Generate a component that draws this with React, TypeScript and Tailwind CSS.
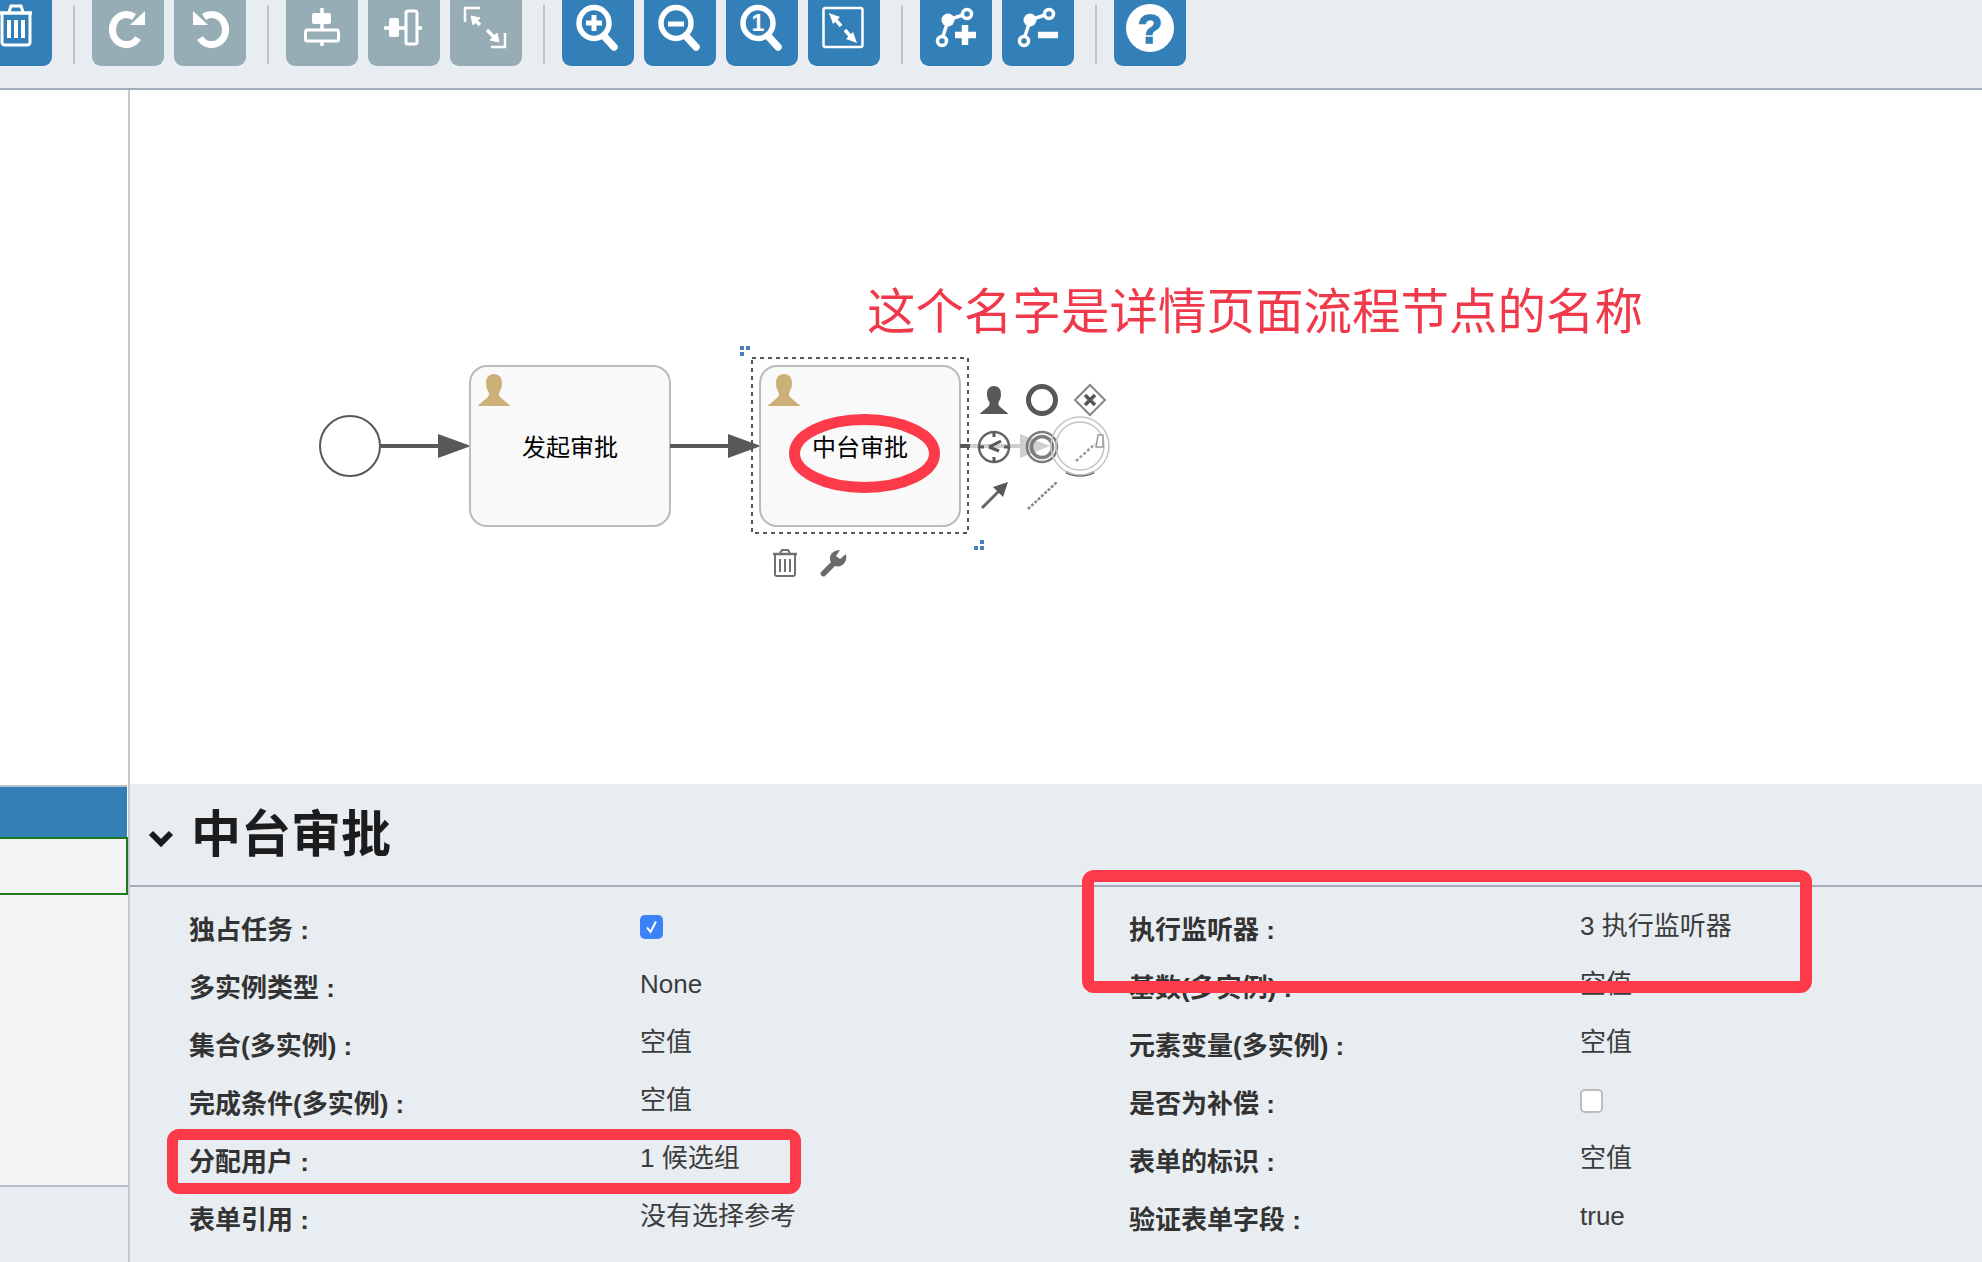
import React from "react";

const FONT = "font-['Liberation_Sans','Noto_Sans_CJK_SC',sans-serif]";

function Person({ x, y, s, fill }: { x: number; y: number; s: number; fill: string }) {
  return (
    <g transform={`translate(${x} ${y}) scale(${s})`} fill={fill}>
      <path d="M16 0c5 0 8 3.500 8 9 0 4-1 6.500-2.500 9-1 2 -.5 4 1 5.500L32 31.500V32H0v-.5l9.500-8c1.500-1.500 2-3.500 1-5.500C9 15.500 8 13 8 9c0-5.500 3-9 8-9z" />
    </g>
  );
}

function Lens({ children }: { children?: React.ReactNode }) {
  return (
    <g stroke="#fff" fill="none">
      <ellipse cx="32" cy="23" rx="15" ry="15.500" strokeWidth="5.500" />
      <path d="M42 36 L52 47" strokeWidth="7.500" strokeLinecap="round" />
      {children}
    </g>
  );
}

function Bend({ plus }: { plus: boolean }) {
  return (
    <g>
      <g stroke="#fff" strokeWidth="3.500" fill="none">
        <path d="M28 20 L43 15" />
        <path d="M27 24 L23 36" />
        <circle cx="47" cy="14" r="4.500" />
        <circle cx="22" cy="41" r="4.500" />
      </g>
      <circle cx="28" cy="20" r="6.500" fill="#fff" />
      {plus ? (
        <path d="M45 25 V45 M35 35 H56" stroke="#fff" strokeWidth="6.500" />
      ) : (
        <path d="M36 35 H56" stroke="#fff" strokeWidth="6.500" />
      )}
    </g>
  );
}

const icons: Record<string, React.ReactNode> = {
  trash: (
    <g fill="none" stroke="#fff">
      <path d="M20 13 H52" strokeWidth="3.500" />
      <path d="M29 12 L31 6 H41 L43 12" strokeWidth="3" />
      <path d="M22 14 V42 Q22 45 25 45 H47 Q50 45 50 42 V14" strokeWidth="3" />
      <path d="M29 20 V38 M36 20 V38 M43 20 V38" strokeWidth="4" />
    </g>
  ),
  redo: (
    <g>
      <path d="M46 38 A14 15 0 1 1 42 17" fill="none" stroke="#fff" strokeWidth="7" />
      <path d="M53 11 V25 H38 Z" fill="#fff" />
    </g>
  ),
  undo: (
    <g>
      <path d="M26 38 A14 15 0 1 0 30 17" fill="none" stroke="#fff" strokeWidth="7" />
      <path d="M19 11 V25 H34 Z" fill="#fff" />
    </g>
  ),
  alignV: (
    <g>
      <path d="M36 8 V46" stroke="#fff" strokeWidth="3.500" />
      <rect x="26" y="13" width="19" height="11" rx="2" fill="#fff" />
      <rect x="19.500" y="30" width="33" height="11" rx="2" fill="#97adb5" stroke="#fff" strokeWidth="3" />
    </g>
  ),
  alignH: (
    <g>
      <path d="M16 28 H54" stroke="#fff" strokeWidth="3.500" />
      <rect x="21" y="18" width="10" height="19" rx="2" fill="#fff" />
      <rect x="38" y="11" width="11" height="33" rx="2" fill="#97adb5" stroke="#fff" strokeWidth="3" />
    </g>
  ),
  same: (
    <g fill="none" stroke="#fff" strokeWidth="2.500">
      <path d="M15 22 V8 H30" />
      <path d="M55 33 V47 H41" />
      <path d="M30 25 L25 20" strokeWidth="3.500" />
      <path d="M21 16 L30 18 L23 25 Z" fill="#fff" strokeWidth="1" />
      <path d="M37 30 L45 38" strokeWidth="3.500" />
      <path d="M49 42 L40 40 L47 33 Z" fill="#fff" strokeWidth="1" />
    </g>
  ),
  zoomIn: (
    <Lens>
      <path d="M32 15 V31 M24 23 H40" strokeWidth="5" />
    </Lens>
  ),
  zoomOut: (
    <Lens>
      <path d="M24 24 H40" strokeWidth="5" />
    </Lens>
  ),
  zoomOne: (
    <Lens>
      <text x="32" y="31" textAnchor="middle" fontSize="23" fontWeight="700" fill="#fff" stroke="none" fontFamily="Liberation Sans">
        1
      </text>
    </Lens>
  ),
  fit: (
    <g>
      <rect x="15.500" y="8" width="39" height="39" rx="2" fill="none" stroke="#fff" strokeWidth="2.500" />
      <path d="M21 13 L32 17 L25 24 Z M49 43 L38 39 L45 32 Z" fill="#fff" />
      <path d="M27 19 L33 26 M37 30 L43 37" stroke="#fff" strokeWidth="3.500" />
    </g>
  ),
  addBend: <Bend plus />,
  delBend: <Bend plus={false} />,
  help: (
    <g>
      <ellipse cx="36" cy="28" rx="24" ry="24" fill="#fff" />
      <text x="36" y="43" textAnchor="middle" fontSize="40" fontWeight="700" fill="#337fb8" stroke="#337fb8" strokeWidth="1.500" fontFamily="Liberation Sans">
        ?
      </text>
    </g>
  ),
};

function ToolButton({ icon, muted, className = "" }: { icon: string; muted?: boolean; className?: string }) {
  return (
    <button
      className={`h-[66px] w-[72px] shrink-0 rounded-b-[9px] ${muted ? "bg-[#97adb5]" : "bg-[#337fb8]"} ${className}`}
    >
      <svg viewBox="0 0 72 66" className="block h-[66px] w-[72px]">
        {icons[icon]}
      </svg>
    </button>
  );
}

function Sep() {
  return <div className="ml-[11px] mr-[7px] mt-[5px] h-[59px] w-[2px] shrink-0 bg-[#bfc4cb]" />;
}

function Checkbox({ checked }: { checked: boolean }) {
  return checked ? (
    <div className="mt-[7px] flex h-[24px] w-[23px] items-center justify-center rounded-[5px] bg-[#3b82f6]">
      <svg viewBox="0 0 23 24" className="h-[24px] w-[23px]">
        <path d="M7 12.500 L10.500 17 L16 6.500" fill="none" stroke="#fff" strokeWidth="2" />
      </svg>
    </div>
  ) : (
    <div className="mt-[7px] h-[24px] w-[23px] rounded-[5px] border-2 border-[#bcbcbc] bg-white" />
  );
}

type Row = { label: string; value?: string; check?: boolean };

const leftRows: Row[] = [
  { label: "独占任务 :", check: true },
  { label: "多实例类型 :", value: "None" },
  { label: "集合(多实例) :", value: "空值" },
  { label: "完成条件(多实例) :", value: "空值" },
  { label: "分配用户 :", value: "1 候选组" },
  { label: "表单引用 :", value: "没有选择参考" },
];

const rightRows: Row[] = [
  { label: "执行监听器 :", value: "3 执行监听器" },
  { label: "基数(多实例) :", value: "空值" },
  { label: "元素变量(多实例) :", value: "空值" },
  { label: "是否为补偿 :", check: false },
  { label: "表单的标识 :", value: "空值" },
  { label: "验证表单字段 :", value: "true" },
];

function PropColumn({ rows }: { rows: Row[] }) {
  return (
    <div className="flex w-[940px] shrink-0 flex-col">
      {rows.map((r) => (
        <div key={r.label} className="flex h-[58px] items-start text-[26px] leading-[36px] text-[#333]">
          <div className="mt-[13px] w-[451px] shrink-0 font-bold text-[#333]">{r.label}</div>
          <div className="mt-[9px] text-[#3c3c3c]">
            {r.check !== undefined ? <Checkbox checked={r.check} /> : r.value}
          </div>
        </div>
      ))}
    </div>
  );
}

function TaskNode({ x, label }: { x: number; label: string }) {
  return (
    <g>
      <rect x={x} y="366" width="200" height="160" rx="17" fill="#f9f9f9" stroke="#bbb" strokeWidth="2" />
      <Person x={x + 8} y={374} s={1} fill="#cdb077" />
      <text x={x + 100} y="456" textAnchor="middle" fontSize="24" fill="#000" fontFamily="Liberation Sans, Noto Sans CJK SC, sans-serif">
        {label}
      </text>
    </g>
  );
}

function Diagram() {
  return (
    <svg viewBox="130 90 1852 694" className="absolute inset-0 h-full w-full">
      <circle cx="350" cy="446" r="30" fill="#fff" stroke="#585858" strokeWidth="2" />
      <path d="M380 446 H442" stroke="#585858" strokeWidth="4" />
      <path d="M438 434 L471 446 L438 458 Z" fill="#585858" />
      <TaskNode x={470} label="发起审批" />
      <path d="M670 446 H732" stroke="#585858" strokeWidth="4" />
      <path d="M728 434 L761 446 L728 458 Z" fill="#585858" />
      <TaskNode x={760} label="中台审批" />
      <rect x="752" y="358" width="216" height="175" fill="none" stroke="#555" strokeWidth="2" strokeDasharray="4 4" />
      <g fill="#4a7fc0">
        <rect x="740" y="346" width="4" height="4" />
        <rect x="746" y="346" width="4" height="4" />
        <rect x="740" y="352" width="4" height="4" />
        <rect x="980" y="540" width="4" height="4" />
        <rect x="974" y="546" width="4" height="4" />
        <rect x="980" y="546" width="4" height="4" />
      </g>

      {/* live drag connector */}
      <path d="M960 446 H970" stroke="#585858" strokeWidth="4" />
      <path d="M970 446 H1024" stroke="#cfcfcf" strokeWidth="4" />
      <path d="M1020 434 L1050 446 L1020 458 Z" fill="#cfcfcf" />

      {/* context pad */}
      <Person x={980} y={386} s={0.875} fill="#585858" />
      <circle cx="1042" cy="400" r="13.500" fill="none" stroke="#585858" strokeWidth="5" />
      <path d="M1090 385 L1105 400 L1090 415 L1075 400 Z" fill="#fff" stroke="#888" strokeWidth="2" />
      <path d="M1085 395 L1095 405 M1095 395 L1085 405" stroke="#555" strokeWidth="3.500" />

      <circle cx="994" cy="447" r="15" fill="none" stroke="#666" strokeWidth="2.500" />
      <path d="M994 432 V437 M994 457 V462 M979 447 H984 M1004 447 H1009" stroke="#585858" strokeWidth="3" />
      <path d="M989 447 L1001 441 M989 447 L999 451" stroke="#585858" strokeWidth="3" />
      <circle cx="1042" cy="447" r="15" fill="none" stroke="#707070" strokeWidth="2.500" opacity="0.9" />
      <circle cx="1042" cy="447" r="10.500" fill="none" stroke="#707070" strokeWidth="3.500" opacity="0.9" />

      <path d="M982 508 L1000 490" stroke="#686868" strokeWidth="3" />
      <path d="M1008 482 L1003 497 L993 487 Z" fill="#585858" />
      <path d="M1028 509 L1057 482" stroke="#888" strokeWidth="2.500" strokeDasharray="3 1.500" />

      <path d="M1066 472 A29 29 0 0 0 1094 472" fill="none" stroke="#444" strokeWidth="2" />
      <circle cx="1080" cy="446" r="29" fill="none" stroke="#c4c4c4" strokeWidth="1.500" />
      <circle cx="1080" cy="446" r="24" fill="none" stroke="#c4c4c4" strokeWidth="1.500" />
      <path d="M1076 461 L1095 444" stroke="#999" strokeWidth="2.500" strokeDasharray="3 2" />
      <path d="M1098 435 H1103 V447 H1096 Z" fill="#fff" stroke="#999" strokeWidth="1.500" />

      {/* lower pad */}
      <g fill="none" stroke="#707070">
        <path d="M773 554 H797" strokeWidth="2.500" />
        <path d="M780 553 L782 550 H788 L790 553" strokeWidth="2" />
        <path d="M775 555 V574 Q775 576 777 576 H793 Q795 576 795 574 V555" strokeWidth="2" />
        <path d="M780 559 V572 M785 559 V572 M790 559 V572" strokeWidth="2" />
      </g>
      <path
        d="M846 554 L840 559 L836 556 L840 550 C835 550 830 553 830 558 C830 560 830 561 831 562 L821 572 C819 574 823 578 825 576 L835 566 C841 568 848 563 846 554 Z"
        fill="#6a6a6a"
      />

      {/* red annotation on the node */}
      <ellipse cx="864.500" cy="453.500" rx="70" ry="34" fill="none" stroke="#fd3a4a" strokeWidth="11" />
    </svg>
  );
}

export default function App() {
  return (
    <div className={`relative flex h-[1262px] w-[1982px] flex-col overflow-hidden bg-white ${FONT}`}>
      <header className="flex h-[90px] shrink-0 items-start gap-[10px] border-b-2 border-[#a4acb9] bg-[#e8edf1]">
        <ToolButton icon="trash" className="-ml-[20px]" />
        <Sep />
        <ToolButton icon="redo" muted />
        <ToolButton icon="undo" muted />
        <Sep />
        <ToolButton icon="alignV" muted />
        <ToolButton icon="alignH" muted />
        <ToolButton icon="same" muted />
        <Sep />
        <ToolButton icon="zoomIn" />
        <ToolButton icon="zoomOut" />
        <ToolButton icon="zoomOne" />
        <ToolButton icon="fit" />
        <Sep />
        <ToolButton icon="addBend" />
        <ToolButton icon="delBend" />
        <Sep />
        <ToolButton icon="help" />
      </header>

      <div className="flex min-h-0 flex-1">
        <aside className="flex w-[130px] shrink-0 flex-col border-r-2 border-[#c2c8d1]">
          <div className="h-[695px] shrink-0 bg-white" />
          <div className="mr-[1px] h-[52px] shrink-0 border-t-2 border-[#b9c0ca] bg-[#337fb8]" />
          <div className="h-[58px] shrink-0 border-2 border-l-0 border-[#1f7a1f] bg-[#f3f4f5]" />
          <div className="h-[292px] shrink-0 border-b-2 border-[#b4bcc8] bg-[#f3f4f5]" />
          <div className="flex-1 bg-[#e8edf1]" />
        </aside>

        <main className="flex min-w-0 flex-1 flex-col">
          <section className="relative h-[694px] shrink-0 bg-white">
            <Diagram />
          </section>
          <section className="flex-1 bg-[#e8edf1]">
            <div className="flex h-[103px] items-center gap-[17px] border-b-2 border-[#a4acb9] pl-[18px]">
              <svg viewBox="0 0 26 18" className="mt-[7px] h-[18px] w-[26px]">
                <path d="M3 4 L13 14 L23 4" fill="none" stroke="#1a1a1a" strokeWidth="6" />
              </svg>
              <h1 className="text-[50px] font-bold leading-none text-[#1c1c1c]">中台审批</h1>
            </div>
            <div className="flex pl-[59px] pt-[12px]">
              <PropColumn rows={leftRows} />
              <PropColumn rows={rightRows} />
            </div>
          </section>
        </main>
      </div>

      {/* annotations drawn over the screenshot */}
      <div className="absolute left-[867px] top-[283px] whitespace-nowrap text-[48.500px] leading-[58px] text-[#f0394a]">
        这个名字是详情页面流程节点的名称
      </div>
      <div className="absolute left-[167px] top-[1129px] h-[65px] w-[634px] rounded-[12px] border-[11px] border-[#fd3a4a]" />
      <div className="absolute left-[1082px] top-[870px] h-[123px] w-[730px] rounded-[12px] border-[12px] border-[#fd3a4a]" />
    </div>
  );
}
